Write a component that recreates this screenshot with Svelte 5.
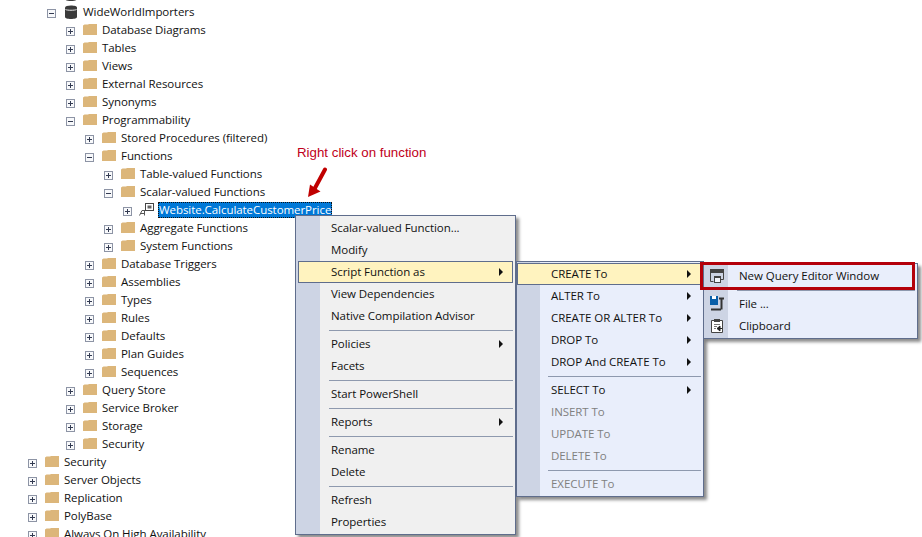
<script>
  const rows = [
    { t: '', l: 1, icon: 'db' },
    { t: 'WideWorldImporters', l: 1, open: true, icon: 'db' },
    { t: 'Database Diagrams', l: 2 },
    { t: 'Tables', l: 2 },
    { t: 'Views', l: 2 },
    { t: 'External Resources', l: 2 },
    { t: 'Synonyms', l: 2 },
    { t: 'Programmability', l: 2, open: true },
    { t: 'Stored Procedures (filtered)', l: 3 },
    { t: 'Functions', l: 3, open: true },
    { t: 'Table-valued Functions', l: 4 },
    { t: 'Scalar-valued Functions', l: 4, open: true },
    { t: 'Website.CalculateCustomerPrice', l: 5, icon: 'fn', selected: true },
    { t: 'Aggregate Functions', l: 4 },
    { t: 'System Functions', l: 4 },
    { t: 'Database Triggers', l: 3 },
    { t: 'Assemblies', l: 3 },
    { t: 'Types', l: 3 },
    { t: 'Rules', l: 3 },
    { t: 'Defaults', l: 3 },
    { t: 'Plan Guides', l: 3 },
    { t: 'Sequences', l: 3 },
    { t: 'Query Store', l: 2 },
    { t: 'Service Broker', l: 2 },
    { t: 'Storage', l: 2 },
    { t: 'Security', l: 2 },
    { t: 'Security', l: 0 },
    { t: 'Server Objects', l: 0 },
    { t: 'Replication', l: 0 },
    { t: 'PolyBase', l: 0 },
    { t: 'Always On High Availability', l: 0 },
  ];

  const mainMenu = [
    [{ t: 'Scalar-valued Function...' }, { t: 'Modify' }, { t: 'Script Function as', sub: true, hot: true }, { t: 'View Dependencies' }, { t: 'Native Compilation Advisor' }],
    [{ t: 'Policies', sub: true }, { t: 'Facets' }],
    [{ t: 'Start PowerShell' }],
    [{ t: 'Reports', sub: true }],
    [{ t: 'Rename' }, { t: 'Delete' }],
    [{ t: 'Refresh' }, { t: 'Properties' }],
  ];

  const scriptMenu = [
    [{ t: 'CREATE To', sub: true, hot: true }, { t: 'ALTER To', sub: true }, { t: 'CREATE OR ALTER To', sub: true }, { t: 'DROP To', sub: true }, { t: 'DROP And CREATE To', sub: true }],
    [{ t: 'SELECT To', sub: true }, { t: 'INSERT To', off: true }, { t: 'UPDATE To', off: true }, { t: 'DELETE To', off: true }],
    [{ t: 'EXECUTE To', off: true }],
  ];
</script>

{#snippet menu(groups)}
  {#each groups as group, g}
    {#if g > 0}<div class="sep"></div>{/if}
    {#each group as item}
      <div class="item" class:hot={item.hot} class:off={item.off}>
        <span>{item.t}</span>
        {#if item.sub}<i class="caret"></i>{/if}
      </div>
    {/each}
  {/each}
{/snippet}

{#snippet expander(open)}
  <svg class="exp" width="9" height="9" viewBox="0 0 9 9">
    <rect x=".5" y=".5" width="8" height="8" fill="#f8f9fb" stroke="#8d94a5" />
    <path d={open ? 'M2 4.500h5' : 'M2 4.500h5M4.500 2v5'} stroke="#333b52" />
  </svg>
{/snippet}

<main class="screen">
  <div class="tree">
    {#each rows as r}
      <div class="row" style="padding-left:{28 + r.l * 19}px">
        {@render expander(r.open)}
        {#if r.icon === 'db'}
          <svg class="ico" width="16" height="16" viewBox="0 0 16 16">
            <path d="M2 3.500C2 2.200 4.700 1.500 8 1.500s6 .7 6 2v9.500c0 1.200-2.700 2-6 2s-6-.8-6-2z" fill="#3a3a3a" />
            <path d="M2.500 5.500c1.500 1 9.500 1 11 0" fill="none" stroke="#e8e8e8" />
          </svg>
        {:else if r.icon === 'fn'}
          <svg class="ico" width="16" height="16" viewBox="0 0 16 16">
            <rect x="6.500" y="1.500" width="8" height="7" fill="#fff" stroke="#444" />
            <path d="M8.500 3.500h4v3h-4z" fill="#666" />
            <path d="M.5 13.500l2.500-5h2.500M2 11.500h3.500M5.500 8v5.500" stroke="#555" fill="none" />
          </svg>
        {:else}
          <svg class="ico" width="16" height="16" viewBox="0 0 16 16">
            <path d="M1 3.500L2.500 2.500h3.500l1-.5h8v11H1z" fill="#dcb67a" />
          </svg>
        {/if}
        {#if r.t}<span class="label" class:selected={r.selected}>{r.t}</span>{/if}
      </div>
    {/each}
  </div>

  <p class="note">Right click on function</p>
  <svg class="arrow" width="24" height="32" viewBox="0 0 24 32">
    <path d="M19 2.500 L9 21" stroke="#c00000" stroke-width="4" stroke-linecap="round" />
    <path d="M2 30 L4 17.500 L14.500 24.500z" fill="#c00000" />
  </svg>

  <div class="menu main-menu">
    {@render menu(mainMenu)}
  </div>

  <div class="menu script-menu">
    {@render menu(scriptMenu)}
  </div>

  <div class="menu create-menu">
    <div class="item">
      <svg width="18" height="18" viewBox="0 0 18 18">
        <path d="M2 2h14v4H2z" fill="#444" />
        <path d="M2.500 4v10.500h3M15.500 4v8.500h-3" fill="none" stroke="#444" />
        <rect x="6.500" y="9.500" width="6" height="6" fill="#f2f4fa" stroke="#444" />
        <path d="M6 9h7v2H6z" fill="#444" />
      </svg>
      <span>New Query Editor Window</span>
    </div>
    <div class="sep"></div>
    <div class="item">
      <svg width="18" height="18" viewBox="0 0 18 18">
        <path d="M2 1h8v9H2z" fill="#0a5fa8" />
        <path d="M4 1h4v3H4z" fill="#fff" />
        <path d="M11 3.500h5M13.500 3.500v11M3 14.500h10" fill="none" stroke="#333" stroke-width="2" />
      </svg>
      <span>File ...</span>
    </div>
    <div class="item">
      <svg width="18" height="18" viewBox="0 0 18 18">
        <path d="M3.500 3.500h11v12h-11z" fill="#fff" stroke="#444" />
        <path d="M6 2h6v3H6z" fill="#444" />
        <path d="M6 7.500h6M6 9.500h3M6 11.500h2" stroke="#777" />
        <path d="M9 11.500h5M9 11.500l3-2.500v5z" stroke="#222" fill="#222" />
      </svg>
      <span>Clipboard</span>
    </div>
  </div>

  <div class="callout"></div>
</main>

<style>
  :global(body) {
    background: #fff;
  }

  .screen {
    position: relative;
    width: 922px;
    height: 537px;
    overflow: hidden;
    font-family: 'Open Sans', 'Noto Sans', sans-serif;
    font-size: 11.5px;
    letter-spacing: -0.06px;
    color: #111;
  }

  .tree {
    margin-top: -15px;
  }

  .row {
    display: flex;
    align-items: center;
    height: 18px;
    white-space: nowrap;
  }

  .exp {
    flex: none;
    margin: 3px 7px 0 0;
  }

  .ico {
    flex: none;
    margin-right: 3px;
  }

  .label {
    padding: 0 1px;
    line-height: 16px;
  }

  .selected {
    background: #0078d7;
    color: #fff;
    outline: 1px dotted #111;
    outline-offset: -1px;
  }

  .note {
    position: absolute;
    left: 297px;
    top: 145px;
    margin: 0;
    font-family: 'Liberation Sans', sans-serif;
    font-size: 13.3px;
    letter-spacing: 0;
    color: #c00020;
  }

  .arrow {
    position: absolute;
    left: 306px;
    top: 167px;
  }

  .menu {
    position: absolute;
    box-sizing: border-box;
    border: 1px solid #5f6d8c;
    box-shadow: 3px 3px 3px rgba(0, 0, 0, 0.45);
    padding: 1px 2px;
  }

  .main-menu {
    left: 295px;
    top: 215px;
    width: 221px;
    height: 320px;
    background: linear-gradient(to right, #cdd4e4 24px, #f0f0f0 24px);
  }

  .script-menu {
    left: 516px;
    top: 261px;
    width: 188px;
    height: 236px;
    padding-left: 0;
    background: linear-gradient(to right, #cdd4e4 23px, #e9eefb 23px);
  }

  .create-menu {
    left: 703px;
    top: 263px;
    width: 215px;
    height: 76px;
    background: linear-gradient(to right, #cdd4e4 24px, #e9eefb 24px);
  }

  .item {
    position: relative;
    display: flex;
    align-items: center;
    box-sizing: border-box;
    height: 22px;
    padding-left: 34px;
    white-space: nowrap;
  }

  .main-menu .item {
    padding-left: 33px;
  }

  .item span {
    padding-bottom: 2px;
  }

  .hot {
    background: #fff3bf;
    outline: 1px solid #5f6d8c;
    outline-offset: -1px;
  }

  .off {
    color: #808080;
  }

  .caret {
    position: absolute;
    right: 10px;
    top: 7px;
    border-left: 4px solid #111;
    border-top: 4px solid transparent;
    border-bottom: 4px solid transparent;
  }

  .sep {
    height: 1px;
    margin: 3px 0 2px 31px;
    background: #8e99ae;
  }

  .create-menu .item {
    padding-left: 2px;
    gap: 13px;
  }

  .callout {
    position: absolute;
    left: 700px;
    top: 262px;
    width: 215px;
    height: 28px;
    box-sizing: border-box;
    border: 3px solid #b4000a;
  }
</style>
